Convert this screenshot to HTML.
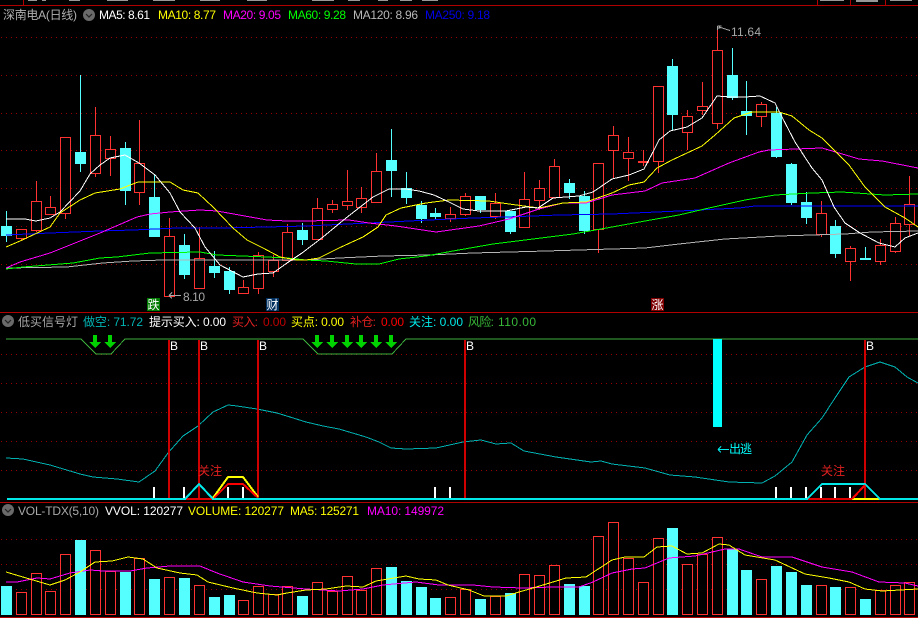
<!DOCTYPE html>
<html><head><meta charset="utf-8"><title>深南电A</title>
<style>
html,body{margin:0;padding:0;background:#000;width:918px;height:618px;overflow:hidden}
svg{display:block}
text{font-family:"Liberation Sans","WenQuanYi Zen Hei","Noto Sans CJK SC",sans-serif;font-size:12px}
.c{shape-rendering:crispEdges}
.l{fill:none;shape-rendering:crispEdges}
</style></head><body>
<svg width="918" height="618" viewBox="0 0 918 618" xmlns="http://www.w3.org/2000/svg">
<defs><pattern id="dots" patternUnits="userSpaceOnUse" x="1" y="0" width="5" height="1"><rect width="1" height="1" fill="#960000"/></pattern></defs>
<rect width="918" height="618" fill="#000"/>

<!-- top clipped strip -->
<g class="c" fill="#989898">
<rect x="28" y="0" width="9" height="1"/><rect x="42" y="0" width="4" height="1"/><rect x="69" y="0" width="11" height="1"/><rect x="107" y="0" width="21" height="1"/><rect x="153" y="0" width="22" height="1"/><rect x="200" y="0" width="20" height="1"/><rect x="247" y="0" width="20" height="1"/><rect x="312" y="0" width="22" height="1"/><rect x="348" y="0" width="12" height="1"/><rect x="378" y="0" width="10" height="1"/><rect x="400" y="0" width="12" height="1"/><rect x="422" y="0" width="16" height="1"/>
<rect x="820" y="0" width="24" height="1"/><rect x="856" y="0" width="22" height="2"/><rect x="890" y="0" width="22" height="1"/>
</g>
<g class="c" fill="#b00000">
<rect x="0" y="5" width="918" height="1"/><rect x="23" y="0" width="1" height="5"/><rect x="817" y="0" width="1" height="5"/><rect x="850" y="0" width="1" height="5"/><rect x="885" y="0" width="1" height="5"/>
<rect x="0" y="312" width="918" height="1"/><rect x="0" y="502" width="918" height="1"/><rect x="0" y="617" width="918" height="1"/>
</g>

<!-- grid -->
<g class="c" fill="url(#dots)">
<rect x="1" y="37" width="917" height="1"/><rect x="1" y="75" width="917" height="1"/><rect x="1" y="113" width="917" height="1"/><rect x="1" y="150" width="917" height="1"/><rect x="1" y="188" width="917" height="1"/><rect x="1" y="226" width="917" height="1"/><rect x="1" y="264" width="917" height="1"/>
<rect x="1" y="354" width="917" height="1"/><rect x="1" y="383" width="917" height="1"/><rect x="1" y="412" width="917" height="1"/><rect x="1" y="441" width="917" height="1"/><rect x="1" y="470" width="917" height="1"/>
<rect x="1" y="539" width="917" height="1"/><rect x="1" y="564" width="917" height="1"/><rect x="1" y="589" width="917" height="1"/>
</g>

<!-- header 1 -->
<text x="3" y="19" fill="#b0b0b0" textLength="74" lengthAdjust="spacing">深南电A(日线)</text>
<circle cx="89" cy="15" r="6" fill="#6a6a6a"/><path d="M86 14l3 3 3-3" fill="none" stroke="#222" stroke-width="1.2"/>
<text x="99" y="19" fill="#fff" textLength="51">MA5: 8.61</text>
<text x="158" y="19" fill="#ff0" textLength="58">MA10: 8.77</text>
<text x="223" y="19" fill="#f0f" textLength="58">MA20: 9.05</text>
<text x="288" y="19" fill="#0f0" textLength="58">MA60: 9.28</text>
<text x="353" y="19" fill="#b8b8b8" textLength="65">MA120: 8.96</text>
<text x="425" y="19" fill="#0000e8" textLength="65">MA250: 9.18</text>

<!-- candle wicks -->
<path class="l" stroke="#ff3232" d="M21.5 238V241M36.5 181V201M36.5 230V232M50.5 196V207M65.5 213V219M95.5 107V135M95.5 173V177M110.5 136V149M110.5 158V176M139.5 120V163M139.5 192V205M169.5 218V236M199.5 227V258M243.5 280V287M258.5 252V255M258.5 288V294M273.5 255V260M273.5 271V277M287.5 224V232M317.5 198V208M332.5 200V204M332.5 209V213M347.5 170V201M347.5 205V210M361.5 187V198M361.5 207V213M376.5 153V171M376.5 202V203M450.5 207V214M450.5 218V222M465.5 193V196M465.5 214V216M495.5 193V203M495.5 216V219M524.5 172V199M539.5 180V188M539.5 200V210M554.5 159V166M598.5 229V253M613.5 126V135M613.5 150V178M628.5 137V152M628.5 158V181M643.5 150V161M643.5 163V166M658.5 161V173M687.5 110V116M687.5 132V150M702.5 82V106M702.5 110V115M717.5 27V50M717.5 123V129M761.5 102V104M761.5 116V127M821.5 201V213M821.5 234V237M850.5 246V248M850.5 261V281M880.5 239V245M880.5 261V265M895.5 217V223M895.5 251V253M909.5 176V204M909.5 224V236"/>
<path class="l" stroke="#55ffff" d="M6.5 211V226M6.5 236V242M80.5 75V152M80.5 164V172M125.5 142V148M125.5 191V205M154.5 175V197M184.5 234V245M184.5 275V279M214.5 251V266M214.5 273V278M229.5 267V271M229.5 290V294M302.5 223V230M302.5 240V245M391.5 129V160M391.5 171V197M406.5 172V188M406.5 198V204M421.5 201V205M421.5 219V223M435.5 208V213M435.5 217V220M480.5 210V213M510.5 232V234M569.5 179V183M569.5 193V199M584.5 191V196M584.5 231V234M672.5 59V66M672.5 115V130M732.5 48V75M732.5 98V100M746.5 81V111M746.5 116V135M776.5 107V113M776.5 157V158M791.5 163V164M791.5 203V205M806.5 192V202M806.5 218V224M835.5 220V226M835.5 254V258M865.5 247V258"/>
<!-- red bodies -->
<path class="c" fill="#000" stroke="#ff3232" d="M16.5 229.5h10v9h-10zM31.5 201.5h10v29h-10zM45.5 207.5h10v7h-10zM60.5 137.5h10v76h-10zM90.5 135.5h10v38h-10zM105.5 149.5h10v9h-10zM134.5 163.5h10v29h-10zM164.5 236.5h10v60h-10zM194.5 258.5h10v30h-10zM238.5 287.5h10v6h-10zM253.5 255.5h10v33h-10zM268.5 260.5h10v11h-10zM282.5 232.5h10v28h-10zM312.5 208.5h10v31h-10zM327.5 204.5h10v5h-10zM342.5 201.5h10v4h-10zM356.5 198.5h10v9h-10zM371.5 171.5h10v31h-10zM445.5 214.5h10v4h-10zM460.5 196.5h10v18h-10zM490.5 203.5h10v13h-10zM519.5 199.5h10v28h-10zM534.5 188.5h10v12h-10zM549.5 166.5h10v31h-10zM593.5 163.5h10v66h-10zM608.5 135.5h10v15h-10zM623.5 152.5h10v6h-10zM653.5 86.5h10v75h-10zM682.5 116.5h10v16h-10zM697.5 106.5h10v4h-10zM712.5 50.5h10v73h-10zM756.5 104.5h10v12h-10zM816.5 213.5h10v21h-10zM845.5 248.5h10v13h-10zM875.5 245.5h10v16h-10zM890.5 223.5h10v28h-10zM904.5 204.5h10v20h-10z"/>
<path class="c" fill="#ff3232" d="M638 161h11v2h-11z"/>
<!-- cyan bodies -->
<path class="c" fill="#55ffff" d="M1 226h11v10H1zM75 152h11v12H75zM120 148h11v43h-11zM149 197h11v40h-11zM179 245h11v30h-11zM209 266h11v7h-11zM224 271h11v19h-11zM297 230h11v10h-11zM386 160h11v11h-11zM401 188h11v10h-11zM416 205h11v14h-11zM430 213h11v4h-11zM475 196h11v14h-11zM505 211h11v21h-11zM564 183h11v10h-11zM579 196h11v35h-11zM667 66h11v49h-11zM727 75h11v23h-11zM741 111h11v5h-11zM771 113h11v44h-11zM786 164h11v39h-11zM801 202h11v16h-11zM830 226h11v28h-11zM860 258h11v2h-11z"/>

<!-- MAs -->
<polyline class="l" stroke="#0000ff" stroke-width="1" points="6,235 50,233 100,231 133,230 177,228 220,228 267,227 306,226 369,223 429,220 473,218 506,217 559,215 612,214 679,211 739,208 755,206 918,206"/>
<polyline class="l" stroke="#b4b4b4" points="6,268 67,267 103,263 133,261 163,260 306,260 339,258 383,256 429,255 473,253 546,251 612,249 645,248 679,244 725,239 779,236 845,234 872,232 918,231"/>
<polyline class="l" stroke="#00ff00" points="6,269 23,267 73,263 100,258 117,257 150,253 200,252 217,255 267,257 287,258 306,260 326,261 356,264 379,264 399,259 426,256 453,251 493,244 533,239 573,234 612,227 645,221 679,215 709,208 745,200 775,195 812,193 842,192 885,195 918,194"/>
<polyline class="l" stroke="#ff00ff" points="6,268 20,262 50,253 100,233 137,217 150,214 170,212 200,210 217,211 267,220 287,221 306,221 349,220 369,223 396,226 416,229 436,232 479,226 509,219 539,209 563,203 586,203 612,195 645,191 662,183 695,178 729,163 759,152 769,150 822,148 839,153 859,159 882,161 918,168"/>
<polyline class="l" stroke="#ffff00" points="6,247 20,241 50,227 60,213 80,200 95,193 120,189 138,182 170,182 183,190 198,193 213,207 233,228 247,240 263,248 280,257 297,260 306,260 319,258 339,248 363,237 378,227 386,215 401,208 426,203 449,200 489,201 509,204 539,208 563,203 586,202 612,193 629,185 644,182 657,168 672,160 702,146 715,135 734,118 752,112 779,112 792,116 809,130 822,138 849,165 865,187 885,207 905,218 918,227"/>
<polyline class="l" stroke="#ffffff" points="6,219 25,219 36,221 50,218 60,212 80,191 90,174 100,165 110,158 125,155 139,163 155,175 170,193 180,212 195,228 205,247 220,265 243,277 258,274 273,273 287,263 302,253 323,237 346,218 373,197 389,189 406,189 419,191 434,195 449,202 463,209 479,211 506,211 526,207 538,208 553,198 579,196 593,192 612,179 629,175 644,169 654,150 659,140 670,131 687,127 702,118 717,96 730,97 745,97 760,96 775,103 782,117 795,142 812,168 822,180 834,207 845,223 860,233 879,243 895,247 905,238 918,233"/>

<!-- price labels -->
<path class="l" stroke="#a8a8a8" d="M717.5 26V30M717.5 26h4M717.5 28h3M719 27l11 3.5"/>
<text x="731" y="36" fill="#a8a8a8" textLength="30">11.64</text>
<path class="l" stroke="#a8a8a8" d="M169 295.5h12M169 295.5l3-3M169 295.5l3 3"/>
<text x="183" y="301" fill="#a8a8a8" textLength="22">8.10</text>
<rect class="c" x="147" y="298" width="13" height="13" fill="#007a00"/><text x="147.5" y="309" fill="#fff">跌</text>
<rect class="c" x="266" y="298" width="13" height="13" fill="#003060"/><text x="266.5" y="309" fill="#fff">财</text>
<rect class="c" x="651" y="298" width="13" height="13" fill="#800000"/><text x="651.5" y="309" fill="#fff">涨</text>

<!-- header 2 -->
<circle cx="8" cy="321" r="6" fill="#6a6a6a"/><path d="M5 320l3 3 3-3" fill="none" stroke="#222" stroke-width="1.2"/>
<text x="18" y="326" fill="#a8a8a8" textLength="60">低买信号灯</text>
<text x="83" y="326" fill="#00b4b4" textLength="60">做空: 71.72</text>
<text x="149" y="326" fill="#fff" textLength="77">提示买入: 0.00</text>
<text x="232" y="326" fill="#e02020" textLength="26">买入:</text><text x="263" y="326" fill="#c00000" textLength="23">0.00</text>
<text x="291" y="326" fill="#ff0" textLength="53">买点: 0.00</text>
<text x="350" y="326" fill="#e02020" textLength="26">补仓:</text><text x="381" y="326" fill="#ff0000" textLength="23">0.00</text>
<text x="409" y="326" fill="#00e8e8" textLength="54">关注: 0.00</text>
<text x="468" y="326" fill="#38b838" textLength="26">风险:</text><text x="498" y="326" fill="#38b838" textLength="38">110.00</text>

<!-- panel 2 -->
<polyline class="l" stroke="#3cb03c" points="6,339 81,339 96,354 111,354 125,339 303,339 318,354 392,354 406,339 918,339"/>
<g class="c" fill="#00d200">
<path d="M93 335h4v7h4l-6 6-6-6h4zM108 335h4v7h4l-6 6-6-6h4z"/>
<path d="M315 335h4v7h4l-6 6-6-6h4zM330 335h4v7h4l-6 6-6-6h4zM345 335h4v7h4l-6 6-6-6h4zM359 335h4v7h4l-6 6-6-6h4zM374 335h4v7h4l-6 6-6-6h4zM389 335h4v7h4l-6 6-6-6h4z"/>
</g>
<rect class="c" x="713" y="339" width="9" height="88" fill="#00ffff"/>
<path class="l" stroke="#00e8e8" d="M718 449.5h11M718 449.5l3-3M718 449.5l3 3"/>
<text x="729" y="453" fill="#00ffff" textLength="23">出逃</text>
<polyline class="l" stroke="#00b0b0" points="6,458 23,459 50,465 80,474 93,477 117,479 139,482 155,471 168,453 183,436 198,426 213,412 228,405 237,406 257,409 277,413 290,417 306,422 323,426 339,429 366,437 379,442 391,448 406,449 436,448 463,442 481,440 496,444 511,443 524,451 556,457 591,462 601,461 612,464 645,468 670,475 695,477 729,482 762,483 775,476 792,462 807,435 822,418 835,398 849,377 865,367 880,362 895,367 907,377 918,383"/>
<g class="c" fill="#fff"><rect x="153" y="487" width="2" height="11"/><rect x="183" y="487" width="2" height="11"/><rect x="227" y="487" width="2" height="11"/><rect x="242" y="487" width="2" height="11"/><rect x="434" y="487" width="2" height="11"/><rect x="449" y="487" width="2" height="11"/><rect x="775" y="487" width="2" height="11"/><rect x="790" y="487" width="2" height="11"/><rect x="805" y="487" width="2" height="11"/><rect x="820" y="487" width="2" height="11"/><rect x="834" y="487" width="2" height="11"/><rect x="849" y="487" width="2" height="11"/></g>
<g class="c" fill="#d00000"><rect x="168" y="340" width="2" height="158"/><rect x="198" y="340" width="2" height="158"/><rect x="257" y="340" width="2" height="158"/><rect x="464" y="340" width="2" height="158"/><rect x="864" y="340" width="2" height="158"/></g>
<g fill="#fff"><text x="170" y="350">B</text><text x="200" y="350">B</text><text x="259" y="350">B</text><text x="466" y="350">B</text><text x="866" y="350">B</text></g>
<rect class="c" x="7" y="498" width="911" height="2" fill="#00e8e8"/>
<text x="198" y="475" fill="#e02020" textLength="24">关注</text>
<text x="821" y="475" fill="#e02020" textLength="24">关注</text>
<path class="l" stroke="#ffff00" stroke-width="2" d="M213 498L228 477H243L258 497"/>
<path class="l" stroke="#ff0000" stroke-width="2" d="M214 498L228 484H243L257 497"/>
<rect class="c" x="186" y="498" width="26" height="2" fill="#e00000"/>
<path class="l" stroke="#00e8e8" stroke-width="2" d="M185 499L199 484L213 499"/>
<rect class="c" x="808" y="498" width="44" height="2" fill="#e00000"/>
<rect class="c" x="852" y="498" width="27" height="2" fill="#ffff00"/>
<path class="l" stroke="#00e8e8" stroke-width="2" d="M807 499L822 484H865L880 499"/>
<path class="l" stroke="#ff0000" stroke-width="2" d="M852 499L865 485"/>

<!-- header 3 -->
<circle cx="8" cy="510" r="6" fill="#6a6a6a"/><path d="M5 509l3 3 3-3" fill="none" stroke="#222" stroke-width="1.2"/>
<text x="18" y="515" fill="#a8a8a8" textLength="81">VOL-TDX(5,10)</text>
<text x="105" y="515" fill="#fff" textLength="78">VVOL: 120277</text>
<text x="188" y="515" fill="#ff0" textLength="96">VOLUME: 120277</text>
<text x="290" y="515" fill="#ff0" textLength="69">MA5: 125271</text>
<text x="367" y="515" fill="#f0f" textLength="77">MA10: 149972</text>

<!-- volume bars -->
<path class="c" fill="#000" stroke="#ff3232" d="M16.5 592.5h10v22h-10zM31.5 573.5h10v41h-10zM45.5 591.5h10v23h-10zM60.5 554.5h10v60h-10zM90.5 550.5h10v64h-10zM105.5 571.5h10v43h-10zM134.5 558.5h10v56h-10zM164.5 577.5h10v37h-10zM194.5 585.5h10v29h-10zM238.5 600.5h10v14h-10zM253.5 586.5h10v28h-10zM268.5 594.5h10v20h-10zM282.5 586.5h10v28h-10zM312.5 582.5h10v32h-10zM327.5 591.5h10v23h-10zM342.5 576.5h10v38h-10zM356.5 590.5h10v24h-10zM371.5 568.5h10v46h-10zM445.5 597.5h10v17h-10zM460.5 589.5h10v25h-10zM490.5 596.5h10v18h-10zM519.5 574.5h10v40h-10zM534.5 575.5h10v39h-10zM549.5 565.5h10v49h-10zM593.5 536.5h10v78h-10zM608.5 522.5h10v92h-10zM623.5 558.5h10v56h-10zM638.5 582.5h10v32h-10zM653.5 538.5h10v76h-10zM682.5 564.5h10v50h-10zM697.5 554.5h10v60h-10zM712.5 537.5h10v77h-10zM756.5 579.5h10v35h-10zM816.5 585.5h10v29h-10zM845.5 587.5h10v27h-10zM875.5 590.5h10v24h-10zM890.5 585.5h10v29h-10zM904.5 582.5h10v32h-10z"/>
<path class="c" fill="#55ffff" d="M1 586h11v29H1zM75 540h11v75H75zM120 572h11v43h-11zM149 579h11v36h-11zM179 578h11v37h-11zM209 597h11v18h-11zM224 595h11v20h-11zM297 596h11v19h-11zM386 567h11v48h-11zM401 581h11v34h-11zM416 587h11v28h-11zM430 598h11v17h-11zM475 599h11v16h-11zM505 593h11v22h-11zM564 584h11v31h-11zM579 586h11v29h-11zM667 528h11v87h-11zM727 549h11v66h-11zM741 570h11v45h-11zM771 566h11v49h-11zM786 572h11v43h-11zM801 585h11v30h-11zM830 587h11v28h-11zM860 599h11v16h-11z"/>
<polyline class="l" stroke="#ff00ff" points="6,582 17,582 37,578 50,579 70,573 90,570 103,571 130,571 147,568 170,566 200,566 217,573 243,582 270,586 306,589 339,591 363,589 383,585 416,582 439,585 473,585 493,587 523,588 553,587 579,587 593,582 612,573 632,569 645,568 669,558 695,556 725,549 739,549 762,557 792,557 822,567 852,572 879,582 905,583 918,586"/>
<polyline class="l" stroke="#ffff00" points="6,572 33,580 50,585 65,580 80,572 95,562 112,561 128,557 143,559 157,568 180,573 197,575 208,582 233,588 257,593 277,595 287,593 306,590 326,589 346,586 363,587 376,581 406,576 419,579 436,580 448,585 469,590 484,596 506,596 519,592 533,588 553,582 566,578 586,577 612,560 625,557 644,557 657,547 672,546 687,554 702,553 719,544 729,545 745,555 775,560 805,574 829,578 849,582 865,589 882,591 918,589"/>
</svg>
</body></html>
